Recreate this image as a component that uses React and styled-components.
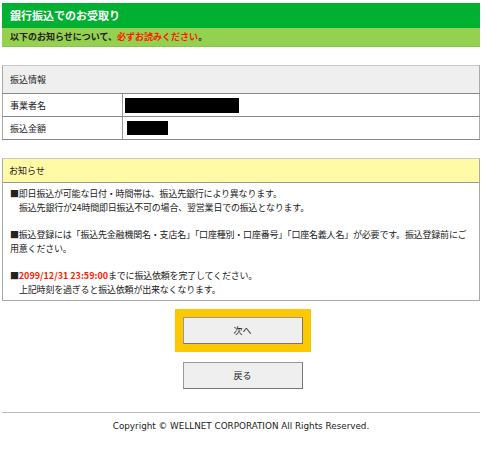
import React from 'react';
import styled, { createGlobalStyle } from 'styled-components';

const Global = createGlobalStyle`
body {
  margin: 0;
  background: #fff;
  font-family: "Noto Sans CJK JP", "Noto Sans", sans-serif;
  color: #222;
}
`

const Page = styled.div`
width: 478px;
padding: 3px 0 0 2px;
`

const Title = styled.h1`
margin: 0;
height: 25px;
background: #00b030;
color: #fff;
font-size: 11px;
font-weight: 700;
line-height: 25px;
padding-left: 8px;
`

const Lead = styled.div`
height: 19px;
background: #94d150;
border-bottom: 1px solid #86c545;
box-sizing: border-box;
font-size: 9px;
font-weight: 700;
line-height: 18px;
padding-left: 8px;
color: #222;
& > em {
  font-style: normal;
  color: #ff1a00;
}
`

const InfoTable = styled.table`
width: 100%;
margin-top: 18px;
border-collapse: collapse;
border: 1px solid #aaa;
border-top-color: #c8c8c8;
font-size: 9px;
& th {
  background: #efefef;
  text-align: left;
  font-weight: 400;
  height: 27px;
  padding: 0 0 0 7px;
  border-bottom: 1px solid #888;
}
& td {
  height: 22px;
  padding: 0 0 0 7px;
  border-bottom: 1px solid #888;
}
& td.label {
  width: 112px;
  border-right: 1px solid #999;
}
& td.value {
  padding-left: 2px;
}
`

const Redacted = styled.span`
display: block;
width: ${p => p.$w}px;
height: ${p => p.$h}px;
margin-left: ${p => p.$off}px;
background: #000;
`

const Notice = styled.section`
margin-top: 18px;
border: 1px solid #aaa;
border-top-color: #c8c8c8;
`

const NoticeHead = styled.div`
height: 23px;
background: #fffaa6;
border-bottom: 1px solid #999;
font-size: 9px;
line-height: 23px;
padding-left: 6px;
`

const NoticeBody = styled.div`
padding: 4px 6px 3px 7px;
font-size: 9px;
line-height: 13.7px;
letter-spacing: -0.2px;
& > p {
  margin: 0 0 13.7px;
}
& > p:last-child {
  margin-bottom: 0;
}
& .indent {
  padding-left: 9px;
}
& strong {
  color: #ff1a00;
  font-weight: 700;
  letter-spacing: 0;
}
`

const Actions = styled.div`
display: flex;
flex-direction: column;
align-items: center;
gap: 18px;
margin-top: 16px;
`

const Button = styled.button`
width: 120px;
height: 27px;
margin-left: 3px;
background: #efefef;
border: 1px solid #777;
border-top-color: #999;
border-left-color: #999;
font-family: "Noto Sans CJK JP", sans-serif;
font-size: 9px;
color: #222;
padding: 0;
outline: ${p => (p.$focus ? '8px solid #fcc800' : 'none')};
`

const Footer = styled.footer`
margin-top: 23px;
border-top: 1px solid #bbb;
text-align: center;
font-family: "DejaVu Sans", Verdana, sans-serif;
font-size: 8.8px;
color: #222;
padding-top: 8px;
`

export default function App() {
  return (
    <Page>
      <Global />
      <Title>銀行振込でのお受取り</Title>
      <Lead>以下のお知らせについて、<em>必ずお読みください</em>。</Lead>

      <InfoTable>
        <tbody>
          <tr><th colSpan={2}>振込情報</th></tr>
          <tr>
            <td className="label">事業者名</td>
            <td className="value"><Redacted $w={114} $h={15} $off={0} /></td>
          </tr>
          <tr>
            <td className="label">振込金額</td>
            <td className="value"><Redacted $w={41} $h={14} $off={2} /></td>
          </tr>
        </tbody>
      </InfoTable>

      <Notice>
        <NoticeHead>お知らせ</NoticeHead>
        <NoticeBody>
          <p>
            ■即日振込が可能な日付・時間帯は、振込先銀行により異なります。<br />
            <span className="indent">振込先銀行が24時間即日振込不可の場合、翌営業日での振込となります。</span>
          </p>
          <p>■振込登録には「振込先金融機関名・支店名」「口座種別・口座番号」「口座名義人名」が必要です。振込登録前にご用意ください。</p>
          <p>
            ■<strong>2099/12/31 23:59:00</strong>までに振込依頼を完了してください。<br />
            <span className="indent">上記時刻を過ぎると振込依頼が出来なくなります。</span>
          </p>
        </NoticeBody>
      </Notice>

      <Actions>
        <Button $focus>次へ</Button>
        <Button>戻る</Button>
      </Actions>

      <Footer>Copyright © WELLNET CORPORATION All Rights Reserved.</Footer>
    </Page>
  );
}
